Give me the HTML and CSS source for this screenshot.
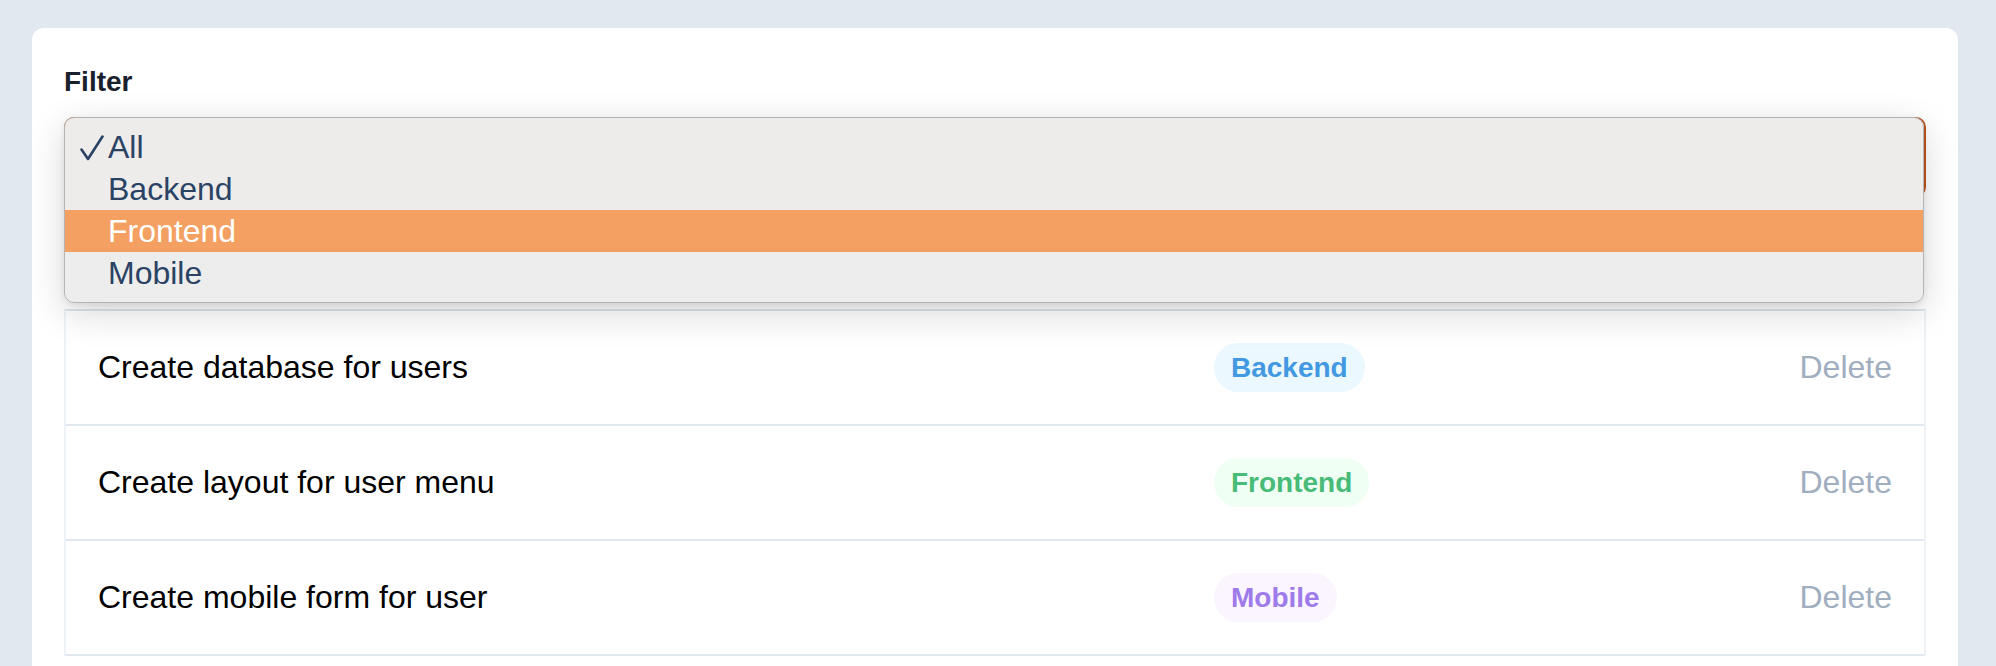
FILE: index.html
```html
<!DOCTYPE html>
<html lang="en">
<head>
<meta charset="utf-8">
<title>Tasks</title>
<link rel="stylesheet" href="styles.css">
</head>
<body>
<main class="card">
  <label class="label">Filter</label>
  <div class="select-wrap">
    <div class="select"></div>
    <ul class="menu">
      <li class="opt"><span class="check"><svg width="24" height="26" viewBox="0 0 24 26"><path d="M1.5 14.5 L8 24 L22.5 1.5" fill="none" stroke="#2a4365" stroke-width="2.6" stroke-linecap="round" stroke-linejoin="round"/></svg></span>All</li>
      <li class="opt"><span class="check"></span>Backend</li>
      <li class="opt opt-active"><span class="check"></span>Frontend</li>
      <li class="opt"><span class="check"></span>Mobile</li>
    </ul>
  </div>
  <ul class="list">
    <li class="row">
      <span class="task">Create database for users</span>
      <span class="badge badge-backend">Backend</span>
      <span class="delete">Delete</span>
    </li>
    <li class="row">
      <span class="task">Create layout for user menu</span>
      <span class="badge badge-frontend">Frontend</span>
      <span class="delete">Delete</span>
    </li>
    <li class="row">
      <span class="task">Create mobile form for user</span>
      <span class="badge badge-mobile">Mobile</span>
      <span class="delete">Delete</span>
    </li>
  </ul>
</main>
</body>
</html>
```

FILE: styles.css
```css
* { box-sizing: border-box; }

html, body {
  margin: 0;
  padding: 0;
  background: #e2e8f0;
  font-family: "Liberation Sans", Arial, sans-serif;
  overflow: hidden;
  height: 666px;
}

.card {
  display: flex;
  flex-direction: column;
  width: 1926px;
  margin: 28px 0 0 32px;
  padding: 34px 32px 32px;
  background: #ffffff;
  border-radius: 12px;
  min-height: 700px;
}

.label {
  display: block;
  font-size: 28px;
  line-height: 40px;
  font-weight: 700;
  color: #1a202c;
  margin-bottom: 15px;
}

.select-wrap {
  position: relative;
  height: 80px;
  margin-bottom: 112px;
}

.select {
  height: 80px;
  border: 2px solid #c05621;
  border-radius: 10px;
  background: #ffffff;
}

.menu {
  position: absolute;
  top: 0;
  left: 0;
  width: 1860px;
  margin: 0;
  padding: 8px 0;
  list-style: none;
  background: linear-gradient(#eeecea, #ededed);
  border: 1px solid #b6b4b2;
  border-radius: 10px;
  box-shadow: 0 10px 36px rgba(0, 0, 0, 0.16), 0 2px 6px rgba(0, 0, 0, 0.08);
  z-index: 2;
}

.opt {
  display: flex;
  align-items: center;
  height: 42px;
  padding-left: 15px;
  font-size: 32px;
  line-height: 42px;
  color: #2a4365;
}

.opt-active {
  background: #f4a062;
  color: #ffffff;
}

.check {
  display: inline-flex;
  align-items: center;
  width: 28px;
  height: 42px;
}

.check svg {
  display: block;
  margin-top: 2px;
}

.list {
  margin: 0;
  padding: 0;
  list-style: none;
  border-top: 2px solid #dfe4ea;
  border-left: 2px solid #edf2f7;
  border-right: 2px solid #edf2f7;
}

.row {
  display: grid;
  grid-template-columns: 1116px 1fr auto;
  align-items: center;
  padding: 32px 32px;
  border-bottom: 2px solid #e2e8f0;
}

.task {
  font-size: 32px;
  line-height: 49px;
  color: #000000;
}

.badge {
  justify-self: start;
  height: 49px;
  padding: 0 17px;
  border-radius: 25px;
  font-size: 28px;
  line-height: 49px;
  font-weight: 700;
}

.badge-backend { background: #ebf8ff; color: #4299e1; }
.badge-frontend { background: #f0fff4; color: #48bb78; }
.badge-mobile { background: #faf5ff; color: #9f7aea; }

.delete {
  font-size: 32px;
  line-height: 49px;
  color: #a0aec0;
}
```
